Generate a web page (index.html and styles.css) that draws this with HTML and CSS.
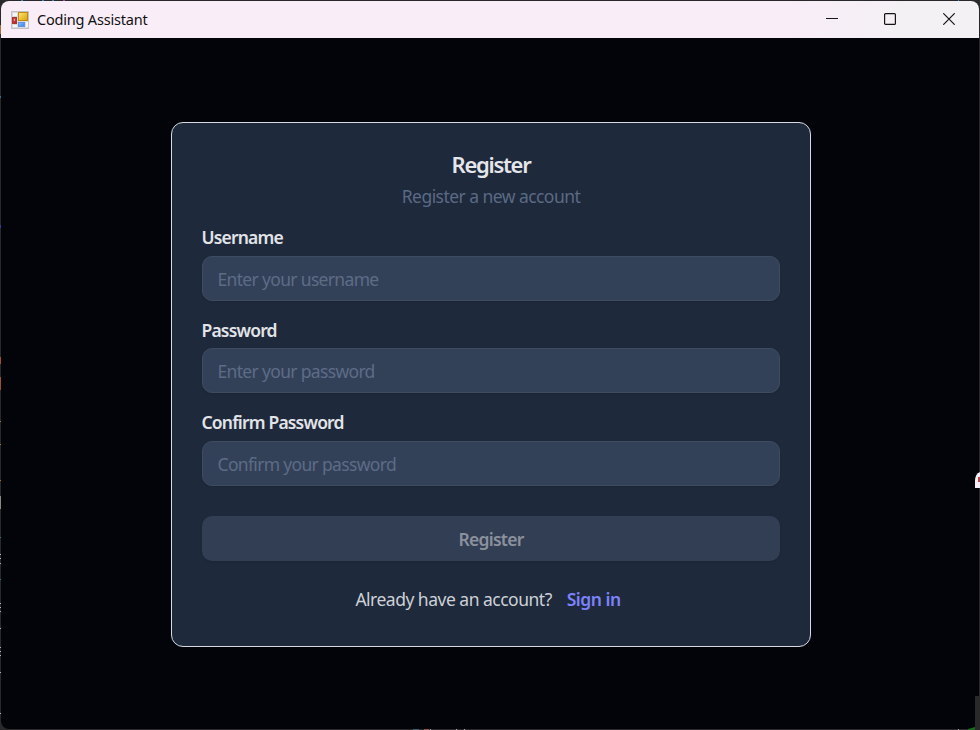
FILE: index.html
```html
<!DOCTYPE html>
<html lang="en">
<head>
<meta charset="utf-8">
<title>Coding Assistant</title>
<link rel="stylesheet" href="styles.css">
</head>
<body>
<div class="window">
  <header class="titlebar">
    <svg class="app-icon" width="18" height="18" viewBox="0 0 18 18">
      <defs>
        <linearGradient id="gold" x2="1" y2="1"><stop stop-color="#ffe680"/><stop offset="1" stop-color="#dca000"/></linearGradient>
        <linearGradient id="red" y2="1"><stop stop-color="#dc5550"/><stop offset="1" stop-color="#b02020"/></linearGradient>
        <linearGradient id="blue" x2="1" y2="1"><stop stop-color="#91bcff"/><stop offset="1" stop-color="#397ee0"/></linearGradient>
      </defs>
      <rect x=".5" y=".5" width="17" height="17" fill="#d9d8dc" stroke="#c4c1c6"/>
      <path d="M2 2h4v3H2zM2 14h4v2H2z" fill="#f6f4f7"/>
      <rect x="7.5" y="1.5" width="9" height="8" fill="url(#gold)" stroke="#bd8a12"/>
      <rect x="1.5" y="6.5" width="4" height="6" fill="url(#red)" stroke="#a93430"/>
      <path d="M3 8h1v2H3z" fill="#f0a09a"/>
      <rect x="7.5" y="11.5" width="6" height="4" fill="url(#blue)" stroke="#6194df"/>
      <path d="M15 11h2v5h-2z" fill="#f6f4f7"/>
    </svg>
    <span class="app-name">Coding Assistant</span>
    <div class="controls">
      <svg width="12" height="12" viewBox="0 0 12 12"><path d="M0 5.5h12"/></svg>
      <svg width="12" height="12" viewBox="0 0 12 12"><rect x=".6" y=".6" width="10.8" height="10.8" rx="1"/></svg>
      <svg class="close" width="12" height="12" viewBox="0 0 12 12"><path d="M.3.3l11.4 11.4M11.7.3L.3 11.7"/></svg>
    </div>
  </header>
  <main class="content">
    <form class="card">
      <h1 class="title">Register</h1>
      <p class="subtitle">Register a new account</p>
      <div class="field">
        <label class="label" for="user">Username</label>
        <input class="input" id="user" placeholder="Enter your username">
      </div>
      <div class="field">
        <label class="label" for="pass">Password</label>
        <input class="input" id="pass" type="password" placeholder="Enter your password">
      </div>
      <div class="field">
        <label class="label" for="confirm">Confirm Password</label>
        <input class="input" id="confirm" type="password" placeholder="Confirm your password">
      </div>
      <button class="submit" type="button" disabled>Register</button>
      <p class="footer"><span>Already have an account?</span><a class="signin">Sign in</a></p>
    </form>
  </main>
</div>
<svg class="edges" width="980" height="730" viewBox="0 0 980 730">
  <path d="M0 25h1v9H0z" fill="#ac6c40"/>
  <path d="M0 96h1v2H0zM0 537h1v1H0zM0 579h1v1H0z" fill="#36718b"/>
  <path d="M0 225h1v3H0z" fill="#343b9c"/>
  <path d="M0 357h1v7H0zM0 377h1v13H0z" fill="#9b5030"/>
  <path d="M0 421h1v1H0zM0 444h1v1H0zM0 480h1v1H0z" fill="#aa7432"/>
  <path d="M0 496h1v13H0z" fill="#888984"/>
  <path d="M0 554h1v1H0zM0 558h1v1H0zM0 563h1v1H0zM0 603h1v1H0zM0 607h1v1H0zM0 611h1v1H0zM0 628h1v1H0zM0 647h1v1H0zM0 651h1v1H0zM0 655h1v1H0zM0 672h1v1H0zM0 713h1v1H0z" fill="#b5b5b5"/>
  <path d="M21 0h2v1h-2zM42 0h2v1h-2zM52 0h2v1h-2zM958 0h1v1h-1z" fill="#3c87b8"/>
  <path d="M63 0h2v1h-2z" fill="#a449a4"/>
  <path d="M413 729h6v1h-6z" fill="#3b5969"/>
  <path d="M424 729h5v1h-5z" fill="#985052"/>
  <path d="M430 729h1v1h-1zM456 729h1v1h-1zM464 729h1v1h-1zM958 729h1v1h-1z" fill="#a9a9a9"/>
  <path d="M980 472q-5 2-5 9v7h5z" fill="#f7edf8"/>
  <path d="M978 477h2v5h-2z" fill="#bd4741"/>
  <path d="M975 696h5v34h-5z" fill="#292929"/>
  <path d="M968 729l7-2v3h-7z" fill="#17681d"/>
</svg>
</body>
</html>
```
FILE: styles.css
```css
* { box-sizing: border-box; }
body {
  margin: 0;
  width: 980px;
  height: 730px;
  padding: 1px;
  overflow: hidden;
  background: #29292b;
  font-family: "Noto Sans", "Open Sans", sans-serif;
}
.window {
  height: 728px;
  display: flex;
  flex-direction: column;
  border-radius: 8px;
  overflow: hidden;
  background: #020409;
}
.titlebar {
  height: 37px;
  flex: none;
  display: flex;
  align-items: center;
  padding: 0 24px 0 10px;
  background: linear-gradient(90deg, #f9edf8 80%, #f3f1f4 93%);
  color: #111;
}
.app-icon { margin-right: 8px; }
.app-name { margin-top: -2px; font-size: 14.5px; letter-spacing: -0.2px; white-space: nowrap; }
.controls { margin-left: auto; display: flex; gap: 46px; margin-top: -1px; }
.controls svg { fill: none; stroke: #151515; stroke-width: 1.2; }
.controls .close { margin-left: 1px; }
.content { flex: 1; padding: 84px 0 0 170px; }
.card {
  width: 640px;
  height: 525px;
  padding: 28px 30px;
  border: 1px solid #d7dbe1;
  border-radius: 12px;
  background: #1e293b;
}
.title {
  margin: 0;
  height: 27px;
  line-height: 27px;
  text-align: center;
  font-size: 22px;
  font-weight: 600;
  letter-spacing: -1.3px;
  color: #e4e6ea;
}
.subtitle {
  margin: 4px 0 15px;
  height: 28px;
  line-height: 28px;
  text-align: center;
  font-size: 17.5px;
  letter-spacing: -0.55px;
  color: #5b6a84;
}
.field { height: 92.5px; }
.label {
  display: block;
  height: 31px;
  margin-left: -0.5px;
  line-height: 24px;
  font-size: 17.5px;
  font-weight: 600;
  letter-spacing: -0.82px;
  color: #e2e4e8;
}
.input {
  display: block;
  width: 578px;
  height: 45px;
  padding: 1px 14.5px 0;
  border: 1px solid #3e4c62;
  border-radius: 10px;
  background: #334158;
  box-shadow: 0 1px 2px #0000001a;
  font: 17.5px "Noto Sans", sans-serif;
  letter-spacing: -0.67px;
}
.field:nth-of-type(2) .input { margin-top: -0.5px; }
.input::placeholder { color: #5d6c86; opacity: 1; }
.submit {
  display: block;
  width: 578px;
  height: 45px;
  margin-top: 13.5px;
  padding: 1px 0 0;
  border: 0;
  border-radius: 10px;
  background: #313e54;
  box-shadow: 0 1px 2px #0000001a;
  font: 600 17.5px "Noto Sans", sans-serif;
  letter-spacing: -0.75px;
  color: #8b919c;
}
.footer {
  display: flex;
  justify-content: center;
  margin: 25px 6px 0 0;
  line-height: 26px;
  gap: 15px;
  font-size: 17.5px;
  letter-spacing: -0.5px;
  color: #cdd1d7;
}
.signin { font-weight: 600; color: #7c83fa; }
.edges { position: absolute; inset: 0; pointer-events: none; }
```
